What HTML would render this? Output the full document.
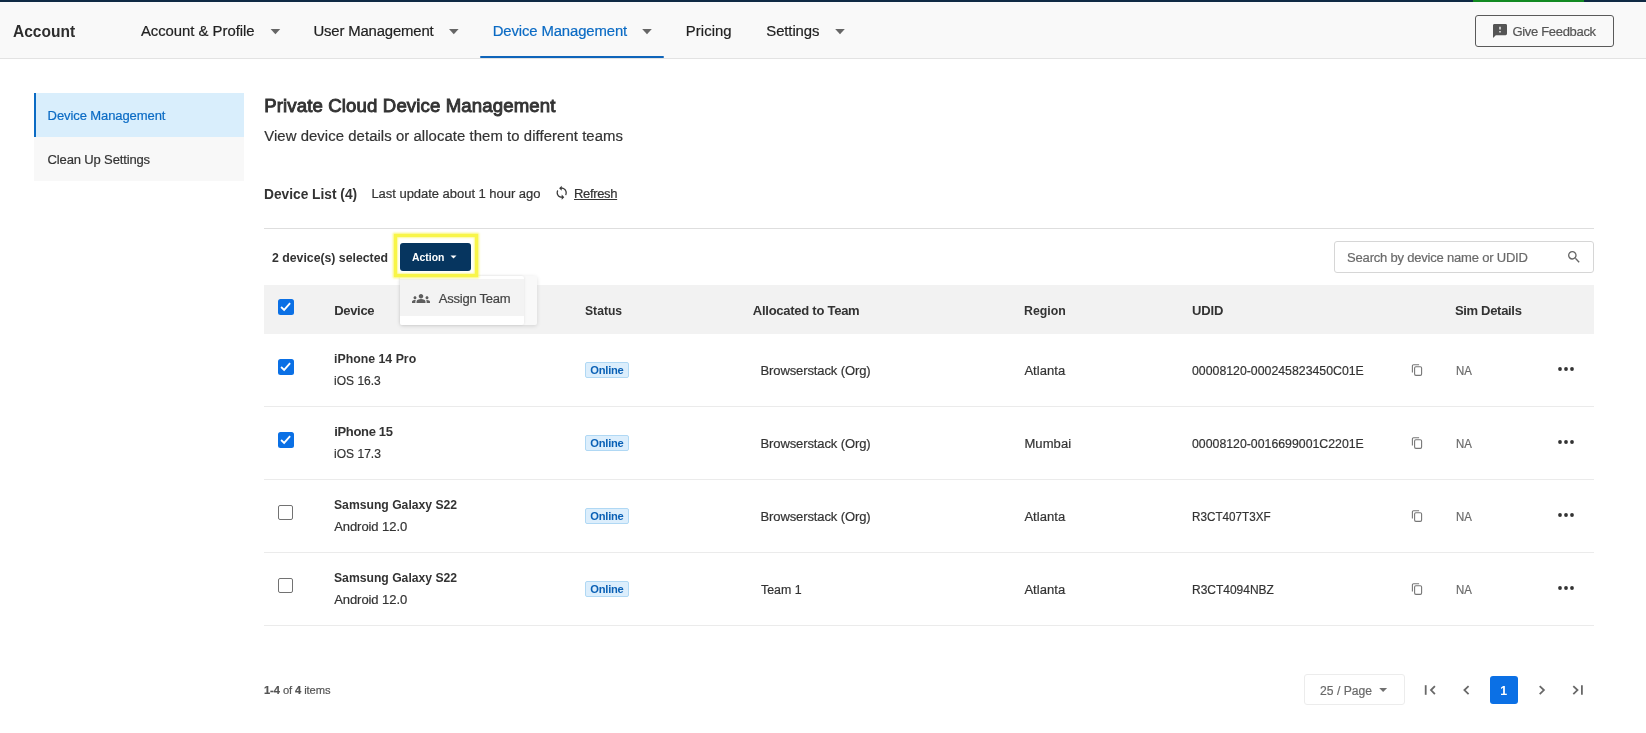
<!DOCTYPE html>
<html lang="en"><head><meta charset="utf-8"><title>Private Cloud Device Management</title>
<style>
html,body{margin:0;padding:0;}
body{width:1646px;height:733px;position:relative;overflow:hidden;background:#fff;font-family:"Liberation Sans",sans-serif;}
.t{position:absolute;white-space:nowrap;line-height:20px;margin:0;padding:0;border:0;background:none;font-family:inherit;font-style:normal;text-align:left;display:block;list-style:none;}
ul{margin:0;padding:0;list-style:none;}
.t b{font-weight:700;}
.a{position:absolute;box-sizing:border-box;}
svg{position:absolute;overflow:visible;}
.m{display:inline-block;width:0;height:0;}
#root{position:absolute;left:0;top:0;width:1646px;height:733px;will-change:transform;}

</style></head>
<body>
<div id="root">
<!-- top strip -->
<div class="a" style="left:0;top:0;width:1646px;height:2px;background:#0f2a44"></div>
<div class="a" style="left:1473px;top:0;width:111px;height:2px;background:#128a22"></div>
<!-- header -->
<div class="a" style="left:0;top:2px;width:1646px;height:57px;background:#f9f9f9;border-bottom:1px solid #e3e3e3"></div>
<div class="a" style="left:479.5px;top:55.7px;width:184px;height:2.3px;background:#0f65ba;border-radius:1px"></div>
<svg width="1646" height="60" style="left:0;top:0" viewBox="0 0 1646 60">
 <g fill="#666">
  <polygon points="270.6,29 280.2,29 275.4,34.2"/>
  <polygon points="449,29 458.6,29 453.8,34.2"/>
  <polygon points="642.2,29 651.8,29 647,34.2"/>
  <polygon points="835.2,29 844.8,29 840,34.2"/>
 </g>
</svg>
<div class="a" style="left:1475px;top:15px;width:139px;height:32px;border:1px solid #5a5a5a;border-radius:3px;background:#f9f9f9"></div>
<svg width="14" height="14" viewBox="2 2 20 20" style="left:1493px;top:23.5px"><path fill="#555" d="M20 2H4c-1.1 0-1.99.9-1.99 2L2 22l4-4h14c1.1 0 2-.9 2-2V4c0-1.1-.9-2-2-2zm-7 12h-2v-2h2v2zm0-4h-2V6h2v4z"/></svg>
<!-- sidebar -->
<div class="a" style="left:34px;top:93px;width:210px;height:44px;background:#d9eefc;border-left:2px solid #0b6bc4"></div>
<div class="a" style="left:34px;top:137px;width:210px;height:44px;background:#f8f8f8"></div>
<!-- refresh icon -->
<svg width="15.4" height="15.4" viewBox="0 0 24 24" style="left:554.35px;top:185.15px"><path fill="#3a3a3a" d="M12 4V1L8 5l4 4V6c3.310 0 6 2.690 6 6 0 1.010-.250 1.970-.7 2.800l1.460 1.460A7.930 7.930 0 0 0 20 12c0-4.420-3.580-8-8-8zm0 14c-3.310 0-6-2.690-6-6 0-1.010.250-1.970.7-2.800L5.240 7.740A7.930 7.930 0 0 0 4 12c0 4.420 3.580 8 8 8v3l4-4-4-4v3z"/></svg>
<!-- divider -->
<div class="a" style="left:264px;top:228px;width:1330px;height:1px;background:#dedede"></div>
<!-- table header -->
<div class="a" style="left:264px;top:285px;width:1330px;height:49px;background:#f2f2f2"></div>
<!-- row separators -->
<div class="a" style="left:264px;top:406px;width:1330px;height:1px;background:#ebebeb"></div>
<div class="a" style="left:264px;top:479px;width:1330px;height:1px;background:#ebebeb"></div>
<div class="a" style="left:264px;top:552px;width:1330px;height:1px;background:#ebebeb"></div>
<div class="a" style="left:264px;top:625px;width:1330px;height:1px;background:#ebebeb"></div>
<!-- yellow highlight + action button -->
<div class="a" style="left:394px;top:234.2px;width:84px;height:42.4px;border:3px solid #f8f548;box-shadow:0 0 2px 0.6px rgba(249,246,80,0.85), inset 0 0 2px 0.6px rgba(249,246,80,0.85);z-index:13"></div>
<div class="a" style="left:400px;top:243px;width:71px;height:28px;background:#06355f;border-radius:3px;z-index:3"></div>
<svg width="8" height="5" viewBox="0 0 8 5" style="left:450.3px;top:255.3px;z-index:6"><polygon fill="#fff" points="0.5,0.5 6.5,0.5 3.5,3.6"/></svg>
<!-- dropdown -->
<div class="a" style="left:400px;top:275.5px;width:137px;height:49.2px;background:#f9f9f9;box-shadow:0 1px 4px rgba(0,0,0,0.13);border-radius:2px;z-index:9"></div>
<div class="a" style="left:400px;top:275.5px;width:123.5px;height:49.2px;background:#fff;box-shadow:0 0 3px rgba(0,0,0,0.10);border-radius:2px;z-index:10"></div>
<div class="a" style="left:400px;top:279px;width:123.5px;height:36.6px;background:#f3f3f3;z-index:11"></div>
<svg width="18" height="9" viewBox="0 0 24 12" style="left:412px;top:293.9px;z-index:12"><path fill="#5e5e5e" d="M12 6.75c1.63 0 3.07.39 4.24.9 1.08.48 1.76 1.56 1.76 2.73V12H6v-1.61c0-1.18.68-2.26 1.76-2.73 1.17-.52 2.61-.91 4.24-.91zM4 7c1.1 0 2-.9 2-2s-.9-2-2-2-2 .9-2 2 .9 2 2 2zm1.13 1.1C4.76 8.04 4.39 8 4 8c-.99 0-1.93.21-2.78.58A2.01 2.01 0 0 0 0 10.430V12h4.5v-1.61c0-.83.23-1.61.63-2.290zM20 7c1.1 0 2-.9 2-2s-.9-2-2-2-2 .9-2 2 .9 2 2 2zm4 3.430c0-.81-.48-1.530-1.220-1.850A6.95 6.95 0 0 0 20 8c-.39 0-.76.04-1.130.1.4.68.630 1.460.630 2.290V12H24v-1.570zM12 0c1.660 0 3 1.340 3 3s-1.340 3-3 3-3-1.340-3-3 1.340-3 3-3z"/></svg>
<!-- search -->
<div class="a" style="left:1334px;top:241px;width:260px;height:32px;border:1px solid #d6d6d6;border-radius:3px;background:#fff"></div>
<svg width="16" height="16" viewBox="0 0 24 24" style="left:1565.5px;top:249px"><path fill="#666" d="M15.5 14h-.79l-.28-.27A6.471 6.471 0 0 0 16 9.500 6.500 6.500 0 1 0 9.500 16c1.610 0 3.090-.590 4.230-1.570l.27.280v.79l5 4.990L20.490 19l-4.990-5zm-6 0C7.010 14 5 11.990 5 9.500S7.010 5 9.500 5 14 7.010 14 9.500 11.990 14 9.500 14z"/></svg>
<div class="a" style="left:278.3px;top:299.3px;width:15.4px;height:15.4px;background:#0b70e5;border-radius:2.5px"></div><svg width="15.4" height="15.4" viewBox="0 0 16 16" style="left:278.3px;top:299.3px"><path d="M3.2 8.3 L6.4 11.3 L12.6 4.3" fill="none" stroke="#fff" stroke-width="1.9" stroke-linecap="butt" stroke-linejoin="miter"/></svg>
<div class="a" style="left:278.3px;top:359.3px;width:15.4px;height:15.4px;background:#0b70e5;border-radius:2.5px"></div><svg width="15.4" height="15.4" viewBox="0 0 16 16" style="left:278.3px;top:359.3px"><path d="M3.2 8.3 L6.4 11.3 L12.6 4.3" fill="none" stroke="#fff" stroke-width="1.9" stroke-linecap="butt" stroke-linejoin="miter"/></svg>
<div class="a" style="left:585px;top:362px;width:44px;height:16px;background:#dceefc;border:1px solid #b0d8f4;border-radius:2px"></div>
<svg width="12" height="14" viewBox="0 0 12 14" style="left:1411px;top:363px"><g fill="none" stroke="#777" stroke-width="1.1"><rect x="3.6" y="3.7" width="7" height="8.7" rx="1.3"/><path d="M1.4 9.6V2.9c0-.7.5-1.200 1.200-1.200h5.500"/></g></svg>
<svg width="18" height="6" viewBox="0 0 18 6" style="left:1557px;top:366px"><g fill="#333"><circle cx="3" cy="3" r="1.9"/><circle cx="9" cy="3" r="1.9"/><circle cx="15" cy="3" r="1.9"/></g></svg>
<div class="a" style="left:278.3px;top:432.3px;width:15.4px;height:15.4px;background:#0b70e5;border-radius:2.5px"></div><svg width="15.4" height="15.4" viewBox="0 0 16 16" style="left:278.3px;top:432.3px"><path d="M3.2 8.3 L6.4 11.3 L12.6 4.3" fill="none" stroke="#fff" stroke-width="1.9" stroke-linecap="butt" stroke-linejoin="miter"/></svg>
<div class="a" style="left:585px;top:435px;width:44px;height:16px;background:#dceefc;border:1px solid #b0d8f4;border-radius:2px"></div>
<svg width="12" height="14" viewBox="0 0 12 14" style="left:1411px;top:436px"><g fill="none" stroke="#777" stroke-width="1.1"><rect x="3.6" y="3.7" width="7" height="8.7" rx="1.3"/><path d="M1.4 9.6V2.9c0-.7.5-1.200 1.200-1.200h5.500"/></g></svg>
<svg width="18" height="6" viewBox="0 0 18 6" style="left:1557px;top:439px"><g fill="#333"><circle cx="3" cy="3" r="1.9"/><circle cx="9" cy="3" r="1.9"/><circle cx="15" cy="3" r="1.9"/></g></svg>
<div class="a" style="left:278.4px;top:505.2px;width:15.1px;height:15px;background:#fff;border:1.2px solid #727272;border-radius:2px"></div>
<div class="a" style="left:585px;top:508px;width:44px;height:16px;background:#dceefc;border:1px solid #b0d8f4;border-radius:2px"></div>
<svg width="12" height="14" viewBox="0 0 12 14" style="left:1411px;top:509px"><g fill="none" stroke="#777" stroke-width="1.1"><rect x="3.6" y="3.7" width="7" height="8.7" rx="1.3"/><path d="M1.4 9.6V2.9c0-.7.5-1.200 1.200-1.200h5.500"/></g></svg>
<svg width="18" height="6" viewBox="0 0 18 6" style="left:1557px;top:512px"><g fill="#333"><circle cx="3" cy="3" r="1.9"/><circle cx="9" cy="3" r="1.9"/><circle cx="15" cy="3" r="1.9"/></g></svg>
<div class="a" style="left:278.4px;top:578.2px;width:15.1px;height:15px;background:#fff;border:1.2px solid #727272;border-radius:2px"></div>
<div class="a" style="left:585px;top:581px;width:44px;height:16px;background:#dceefc;border:1px solid #b0d8f4;border-radius:2px"></div>
<svg width="12" height="14" viewBox="0 0 12 14" style="left:1411px;top:582px"><g fill="none" stroke="#777" stroke-width="1.1"><rect x="3.6" y="3.7" width="7" height="8.7" rx="1.3"/><path d="M1.4 9.6V2.9c0-.7.5-1.200 1.200-1.200h5.500"/></g></svg>
<svg width="18" height="6" viewBox="0 0 18 6" style="left:1557px;top:585px"><g fill="#333"><circle cx="3" cy="3" r="1.9"/><circle cx="9" cy="3" r="1.9"/><circle cx="15" cy="3" r="1.9"/></g></svg>
<div class="a" style="left:1303.6px;top:674.3px;width:101.8px;height:31px;border:1px solid #ececec;border-radius:3px;background:#fff"></div>
<svg width="9" height="5" viewBox="0 0 9 5" style="left:1378.7px;top:688.2px"><polygon fill="#707070" points="0.2,0 8.1,0 4.15,4.1"/></svg>
<div class="a" style="left:1490px;top:676px;width:28px;height:28px;background:#0b70e5;border-radius:3px;z-index:2"></div>
<svg width="170" height="20" viewBox="1420 680 170 20" style="left:1420px;top:680px"><g fill="none" stroke="#686868" stroke-width="1.8">
<path d="M1425.7 685.2v9.600"/><path d="M1434.900 686.100l-3.900 4 3.900 4"/>
<path d="M1468.600 686.100l-4.200 4 4.200 4"/>
<path d="M1539.700 686.100l4.200 4-4.200 4"/>
<path d="M1573.300 686.100l4.200 4-4.200 4"/><path d="M1581.900 685.2v9.600"/>
</g></svg>

<header>
<strong class="t" style="left:13.4px;top:22.00px;font-size:16.74px;font-weight:700;color:#2e2e2e;transform:scaleX(0.9275);transform-origin:0 0;">Account</strong>
<nav aria-label="Account sections">
<a class="t" style="left:140.9px;top:21.00px;font-size:14.88px;font-weight:400;color:#222;-webkit-text-stroke:0.2px #222;letter-spacing:-0.026px;">Account &amp; Profile</a>
<a class="t" style="left:313.5px;top:21.00px;font-size:14.88px;font-weight:400;color:#222;-webkit-text-stroke:0.2px #222;letter-spacing:-0.155px;">User Management</a>
<a class="t" aria-current="page" style="left:492.7px;top:21.00px;font-size:14.88px;font-weight:400;color:#0b6bc4;-webkit-text-stroke:0.2px #0b6bc4;letter-spacing:-0.121px;">Device Management</a>
<a class="t" style="left:685.8px;top:21.00px;font-size:14.88px;font-weight:400;color:#222;-webkit-text-stroke:0.2px #222;letter-spacing:0.055px;">Pricing</a>
<a class="t" style="left:766.3px;top:21.00px;font-size:14.88px;font-weight:400;color:#222;-webkit-text-stroke:0.2px #222;letter-spacing:-0.093px;">Settings</a>
</nav>
<button class="t" type="button" style="left:1512.4px;top:22.00px;font-size:13.02px;font-weight:400;color:#555;-webkit-text-stroke:0.2px #555;letter-spacing:-0.321px;">Give Feedback</button>
</header>
<aside><nav aria-label="Device settings">
<a class="t" aria-current="page" style="left:47.6px;top:106.00px;font-size:13.02px;font-weight:400;color:#0b6bc4;-webkit-text-stroke:0.2px #0b6bc4;letter-spacing:-0.098px;">Device Management</a>
<a class="t" style="left:47.6px;top:150.00px;font-size:13.02px;font-weight:400;color:#333;-webkit-text-stroke:0.2px #333;letter-spacing:-0.151px;">Clean Up Settings</a>
</nav></aside>
<main>
<h1 class="t" style="left:264.2px;top:96.00px;font-size:18.6px;font-weight:400;color:#333;-webkit-text-stroke:0.93px #333;letter-spacing:0.132px;">Private Cloud Device Management</h1>
<p class="t" style="left:264.2px;top:126.00px;font-size:14.88px;font-weight:400;color:#333;-webkit-text-stroke:0.2px #333;letter-spacing:0.070px;">View device details or allocate them to different teams</p>
<h2 class="t" style="left:264.2px;top:184.00px;font-size:14.88px;font-weight:700;color:#333;transform:scaleX(0.9231);transform-origin:0 0;">Device List (4)</h2>
<span class="t" style="left:371.4px;top:184.00px;font-size:13.02px;font-weight:400;color:#333;-webkit-text-stroke:0.2px #333;letter-spacing:-0.036px;">Last update about 1 hour ago</span>
<a class="t" style="left:574.0px;top:184.00px;font-size:13.02px;font-weight:400;color:#333;-webkit-text-stroke:0.2px #333;letter-spacing:-0.346px;text-decoration:underline;text-underline-offset:1px;text-decoration-thickness:1px;">Refresh</a>
<section aria-label="Device table toolbar">
<span class="t" style="left:271.7px;top:248.00px;font-size:13.02px;font-weight:700;color:#333;transform:scaleX(0.9431);transform-origin:0 0;">2 device(s) selected</span>
<button class="t" type="button" aria-expanded="true" style="left:412.4px;top:247.00px;font-size:11.16px;font-weight:700;color:#fff;transform:scaleX(0.9332);transform-origin:0 0;z-index:5;">Action</button>
<ul role="menu">
<li class="t" role="menuitem" style="left:438.8px;top:289.00px;font-size:13.02px;font-weight:400;color:#444;-webkit-text-stroke:0.2px #444;letter-spacing:-0.248px;z-index:12;">Assign Team</li>
</ul>
<label class="t" style="left:1347.1px;top:248.00px;font-size:13.02px;font-weight:400;color:#6a6a6a;-webkit-text-stroke:0.2px #6a6a6a;letter-spacing:-0.209px;">Search by device name or UDID</label>
</section>
<div role="table" aria-label="Device list"><div role="row">
<span class="t" role="columnheader" style="left:334.2px;top:301.00px;font-size:13.02px;font-weight:700;color:#333;letter-spacing:-0.317px;">Device</span>
<span class="t" role="columnheader" style="left:585.1px;top:301.00px;font-size:13.02px;font-weight:700;color:#333;transform:scaleX(0.9326);transform-origin:0 0;">Status</span>
<span class="t" role="columnheader" style="left:752.8px;top:301.00px;font-size:13.02px;font-weight:700;color:#333;letter-spacing:-0.265px;">Allocated to Team</span>
<span class="t" role="columnheader" style="left:1024.4px;top:301.00px;font-size:13.02px;font-weight:700;color:#333;transform:scaleX(0.9476);transform-origin:0 0;">Region</span>
<span class="t" role="columnheader" style="left:1191.9px;top:301.00px;font-size:13.02px;font-weight:700;color:#333;letter-spacing:-0.109px;">UDID</span>
<span class="t" role="columnheader" style="left:1454.9px;top:301.00px;font-size:13.02px;font-weight:700;color:#333;letter-spacing:-0.317px;">Sim Details</span>
</div>
<div role="row">
<span class="t" role="cell" style="left:334.2px;top:349.00px;font-size:13.02px;font-weight:700;color:#333;transform:scaleX(0.9470);transform-origin:0 0;">iPhone 14 Pro</span>
<span class="t" style="left:334.2px;top:371.00px;font-size:13.02px;font-weight:400;color:#333;-webkit-text-stroke:0.2px #333;transform:scaleX(0.9239);transform-origin:0 0;">iOS 16.3</span>
<span class="t" role="cell" style="left:590.3px;top:360.00px;font-size:11.16px;font-weight:700;color:#0a60b5;letter-spacing:-0.244px;">Online</span>
<span class="t" role="cell" style="left:760.5px;top:361.00px;font-size:13.02px;font-weight:400;color:#333;-webkit-text-stroke:0.2px #333;letter-spacing:-0.112px;">Browserstack (Org)</span>
<span class="t" role="cell" style="left:1024.4px;top:361.00px;font-size:13.02px;font-weight:400;color:#333;-webkit-text-stroke:0.2px #333;letter-spacing:0.045px;">Atlanta</span>
<span class="t" role="cell" style="left:1191.9px;top:361.00px;font-size:13.02px;font-weight:400;color:#333;-webkit-text-stroke:0.2px #333;transform:scaleX(0.9457);transform-origin:0 0;">00008120-000245823450C01E</span>
<span class="t" role="cell" style="left:1455.7px;top:361.00px;font-size:13.02px;font-weight:400;color:#6a6a6a;-webkit-text-stroke:0.2px #6a6a6a;transform:scaleX(0.8788);transform-origin:0 0;">NA</span>
</div>
<div role="row">
<span class="t" role="cell" style="left:334.2px;top:422.00px;font-size:13.02px;font-weight:700;color:#333;letter-spacing:-0.336px;">iPhone 15</span>
<span class="t" style="left:334.2px;top:444.00px;font-size:13.02px;font-weight:400;color:#333;-webkit-text-stroke:0.2px #333;transform:scaleX(0.9258);transform-origin:0 0;">iOS 17.3</span>
<span class="t" role="cell" style="left:590.3px;top:433.00px;font-size:11.16px;font-weight:700;color:#0a60b5;letter-spacing:-0.244px;">Online</span>
<span class="t" role="cell" style="left:760.5px;top:434.00px;font-size:13.02px;font-weight:400;color:#333;-webkit-text-stroke:0.2px #333;letter-spacing:-0.112px;">Browserstack (Org)</span>
<span class="t" role="cell" style="left:1024.4px;top:434.00px;font-size:13.02px;font-weight:400;color:#333;-webkit-text-stroke:0.2px #333;letter-spacing:0.101px;">Mumbai</span>
<span class="t" role="cell" style="left:1191.9px;top:434.00px;font-size:13.02px;font-weight:400;color:#333;-webkit-text-stroke:0.2px #333;transform:scaleX(0.9457);transform-origin:0 0;">00008120-0016699001C2201E</span>
<span class="t" role="cell" style="left:1455.7px;top:434.00px;font-size:13.02px;font-weight:400;color:#6a6a6a;-webkit-text-stroke:0.2px #6a6a6a;transform:scaleX(0.8788);transform-origin:0 0;">NA</span>
</div>
<div role="row">
<span class="t" role="cell" style="left:334.2px;top:495.00px;font-size:13.02px;font-weight:700;color:#333;transform:scaleX(0.9349);transform-origin:0 0;">Samsung Galaxy S22</span>
<span class="t" style="left:334.2px;top:517.00px;font-size:13.02px;font-weight:400;color:#333;-webkit-text-stroke:0.2px #333;letter-spacing:-0.074px;">Android 12.0</span>
<span class="t" role="cell" style="left:590.3px;top:506.00px;font-size:11.16px;font-weight:700;color:#0a60b5;letter-spacing:-0.244px;">Online</span>
<span class="t" role="cell" style="left:760.5px;top:507.00px;font-size:13.02px;font-weight:400;color:#333;-webkit-text-stroke:0.2px #333;letter-spacing:-0.112px;">Browserstack (Org)</span>
<span class="t" role="cell" style="left:1024.4px;top:507.00px;font-size:13.02px;font-weight:400;color:#333;-webkit-text-stroke:0.2px #333;letter-spacing:0.045px;">Atlanta</span>
<span class="t" role="cell" style="left:1191.9px;top:507.00px;font-size:13.02px;font-weight:400;color:#333;-webkit-text-stroke:0.2px #333;transform:scaleX(0.8980);transform-origin:0 0;">R3CT407T3XF</span>
<span class="t" role="cell" style="left:1455.7px;top:507.00px;font-size:13.02px;font-weight:400;color:#6a6a6a;-webkit-text-stroke:0.2px #6a6a6a;transform:scaleX(0.8788);transform-origin:0 0;">NA</span>
</div>
<div role="row">
<span class="t" role="cell" style="left:334.2px;top:568.00px;font-size:13.02px;font-weight:700;color:#333;transform:scaleX(0.9349);transform-origin:0 0;">Samsung Galaxy S22</span>
<span class="t" style="left:334.2px;top:590.00px;font-size:13.02px;font-weight:400;color:#333;-webkit-text-stroke:0.2px #333;letter-spacing:-0.074px;">Android 12.0</span>
<span class="t" role="cell" style="left:590.3px;top:579.00px;font-size:11.16px;font-weight:700;color:#0a60b5;letter-spacing:-0.244px;">Online</span>
<span class="t" role="cell" style="left:760.7px;top:580.00px;font-size:13.02px;font-weight:400;color:#333;-webkit-text-stroke:0.2px #333;transform:scaleX(0.9511);transform-origin:0 0;">Team 1</span>
<span class="t" role="cell" style="left:1024.4px;top:580.00px;font-size:13.02px;font-weight:400;color:#333;-webkit-text-stroke:0.2px #333;letter-spacing:0.045px;">Atlanta</span>
<span class="t" role="cell" style="left:1191.9px;top:580.00px;font-size:13.02px;font-weight:400;color:#333;-webkit-text-stroke:0.2px #333;transform:scaleX(0.9204);transform-origin:0 0;">R3CT4094NBZ</span>
<span class="t" role="cell" style="left:1455.7px;top:580.00px;font-size:13.02px;font-weight:400;color:#6a6a6a;-webkit-text-stroke:0.2px #6a6a6a;transform:scaleX(0.8788);transform-origin:0 0;">NA</span>
</div>
</div>
<footer>
<span class="t" style="left:264.0px;top:680.00px;font-size:11.16px;font-weight:400;color:#555;-webkit-text-stroke:0.2px #555;letter-spacing:-0.087px;"><b>1-4</b> of <b>4</b> items</span>
<span class="t" style="left:1320.0px;top:681.00px;font-size:13.02px;font-weight:400;color:#6a6a6a;-webkit-text-stroke:0.2px #6a6a6a;transform:scaleX(0.9348);transform-origin:0 0;">25 / Page</span>
<a class="t" aria-current="page" style="left:1500.3px;top:681.00px;font-size:12.4px;font-weight:700;color:#fff;letter-spacing:0.000px;z-index:3;">1</a>
</footer>
</main>
</div>
</body></html>
